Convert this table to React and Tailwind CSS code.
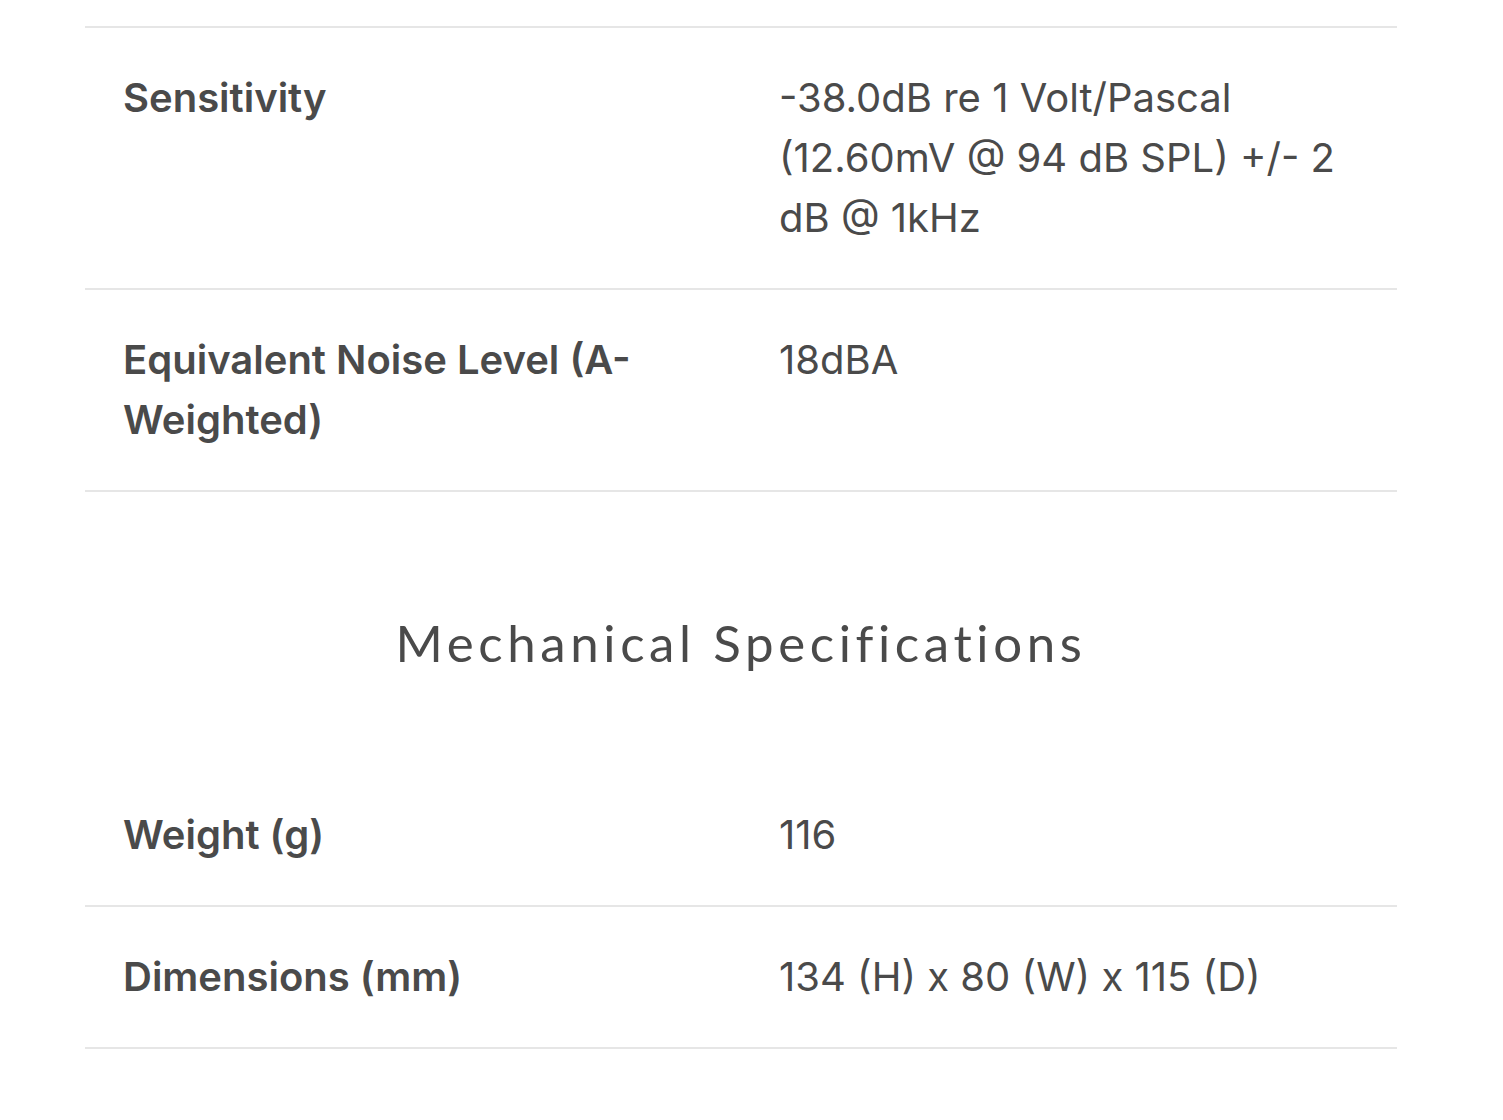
const electrical = [
  { label: 'Sensitivity', value: '-38.0dB re 1 Volt/Pascal (12.60mV @ 94 dB SPL) +/- 2 dB @ 1kHz' },
  { label: 'Equivalent Noise Level (A-Weighted)', value: '18dBA' },
];

const mechanical = [
  { label: 'Weight (g)', value: '116' },
  { label: 'Dimensions (mm)', value: '134 (H) x 80 (W) x 115 (D)' },
];

function SpecRow({ label, value }) {
  return (
    <div className="grid grid-cols-2 border-b-2 border-[#e6e6e6] py-10 text-[40px] leading-[60px] text-[#4a4a4a]">
      <div className="px-[38px] font-semibold">{label}</div>
      <div className="px-[38px] font-normal">{value}</div>
    </div>
  );
}

export default function App() {
  return (
    <div className="min-h-[1120px] bg-white font-['Inter',sans-serif]">
      <div className="mx-[85px] w-[1312px] pt-[26px]">
        <div className="border-b-2 border-[#e6e6e6]" />
        {electrical.map((row) => (
          <SpecRow key={row.label} {...row} />
        ))}

        <h2 className="pt-[115px] pb-[86px] text-center font-['Lato',sans-serif] text-[51px] leading-[72px] font-normal tracking-[4.6px] text-[#4a4a4a]">
          Mechanical Specifications
        </h2>

        {mechanical.map((row) => (
          <SpecRow key={row.label} {...row} />
        ))}
      </div>
    </div>
  );
}
